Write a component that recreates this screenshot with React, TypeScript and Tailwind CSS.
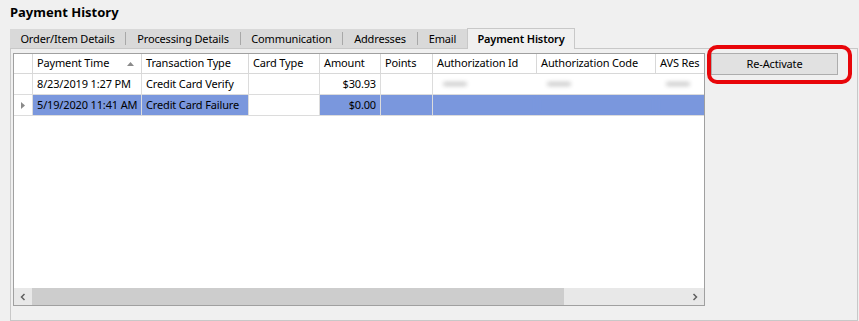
import React from "react";

const cols = [
  { key: "rh", w: 19, label: "" },
  { key: "pt", w: 109, label: "Payment Time" },
  { key: "tt", w: 107, label: "Transaction Type" },
  { key: "ct", w: 71, label: "Card Type" },
  { key: "am", w: 61, label: "Amount" },
  { key: "po", w: 52, label: "Points" },
  { key: "ai", w: 104, label: "Authorization Id" },
  { key: "ac", w: 119, label: "Authorization Code" },
  { key: "av", w: 60, label: "AVS Res" },
];

function Tab({ label, w, last }: { label: string; w: number; last?: boolean }) {
  return (
    <div style={{ width: w }} className="flex h-[19px] items-center bg-[#d9d9d9]">
      <div className="flex-1 text-center leading-[19px]">{label}</div>
      {!last && <div className="h-[13px] w-px bg-[#a8a8a8]" />}
    </div>
  );
}

export default function App() {
  return (
    <div className="relative h-[321px] w-[859px] overflow-hidden bg-[#f0f0f0] font-['Noto_Sans',sans-serif] text-[11px] tracking-[-0.15px] text-black">
      <div className="pl-[10px] pt-[3px] text-[13px] font-bold leading-[19px] tracking-normal">Payment History</div>
      <div className="mt-[6px] flex h-[20px] items-end pl-[10px]">
        <Tab label="Order/Item Details" w={116} />
        <Tab label="Processing Details" w={115} />
        <Tab label="Communication" w={102} />
        <Tab label="Addresses" w={75} />
        <Tab label="Email" w={49} last />
        <div className="-mb-px flex h-[21px] w-[108px] items-center justify-center border border-b-0 border-[#c8c8c8] bg-[#f0f0f0] font-semibold">
          Payment History
        </div>
      </div>
      <div className="ml-[10px] flex h-[273px] w-[848px] border border-[#c8c8c8] pl-[2px] pt-[4px]">
        <div className="flex h-[253px] w-[692px] flex-col overflow-hidden border border-[#a0a0a0] bg-white">
          <div className="flex h-[20px] shrink-0 border-b border-[#d8d8d8]">
            {cols.map((c) => (
              <div
                key={c.key}
                style={{ width: c.w }}
                className="relative flex shrink-0 items-center border-r border-[#d8d8d8] px-[4px] whitespace-nowrap"
              >
                {c.label}
                {c.key === "pt" && (
                  <svg className="absolute right-[7px] top-[8px]" width="7" height="4" viewBox="0 0 7 4">
                    <path d="M3.5 0L7 4H0z" fill="#8a8a8a" />
                  </svg>
                )}
              </div>
            ))}
          </div>
          {[0, 1].map((r) => {
            const sel = r === 1;
            const vals = sel
              ? ["", "5/19/2020 11:41 AM", "Credit Card Failure", "", "$0.00", "", "", "", ""]
              : ["", "8/23/2019 1:27 PM", "Credit Card Verify", "", "$30.93", "", "", "", ""];
            return (
              <div key={r} className="flex h-[21px] shrink-0 border-b border-[#dcdcdc]">
                {cols.map((c, i) => {
                  const blue = sel && i > 0 && i !== 3;
                  const blurred = i >= 6;
                  return (
                    <div
                      key={c.key}
                      style={{ width: c.w }}
                      className={`relative flex shrink-0 items-center overflow-hidden whitespace-nowrap px-[4px] ${
                        blurred ? "" : "border-r border-[#dcdcdc]"
                      } ${blue ? "bg-[#7a97dd]" : ""} ${i === 4 ? "justify-end" : ""}`}
                    >
                      {i === 0 && sel && (
                        <svg className="ml-[3px]" width="4" height="7" viewBox="0 0 4 7">
                          <path d="M0 0L4 3.5L0 7z" fill="#8a8a8a" />
                        </svg>
                      )}
                      {vals[i]}
                      {blurred && !sel && (
                        <div className="ml-[6px] h-[4px] w-[24px] rounded bg-[#c8c8c8] blur-[2px]" />
                      )}
                      {blurred && sel && <div className="absolute inset-0 bg-[#7a97dd] blur-[2px]" />}
                    </div>
                  );
                })}
              </div>
            );
          })}
          <div className="flex-1" />
          <div className="flex h-[17px] shrink-0 items-center bg-[#e8e8e8]">
            <div className="flex w-[18px] items-center justify-center">
              <svg width="6" height="8" viewBox="0 0 6 8">
                <path d="M4.5 1L1.5 4L4.5 7" stroke="#606060" strokeWidth="1.5" fill="none" />
              </svg>
            </div>
            <div className="h-[17px] w-[532px] bg-[#cdcdcd]" />
            <div className="flex-1" />
            <div className="flex w-[18px] items-center justify-center">
              <svg width="6" height="8" viewBox="0 0 6 8">
                <path d="M1.5 1L4.5 4L1.5 7" stroke="#606060" strokeWidth="1.5" fill="none" />
              </svg>
            </div>
          </div>
        </div>
        <div className="ml-[6px]">
          <div className="flex h-[22px] w-[127px] items-center justify-center border border-[#adadad] bg-[#e1e1e1]">
            Re-Activate
          </div>
        </div>
      </div>
      <div className="absolute left-[707px] top-[45px] h-[39px] w-[145px] rounded-[10px] border-[4px] border-[#e8060a]" />
    </div>
  );
}
